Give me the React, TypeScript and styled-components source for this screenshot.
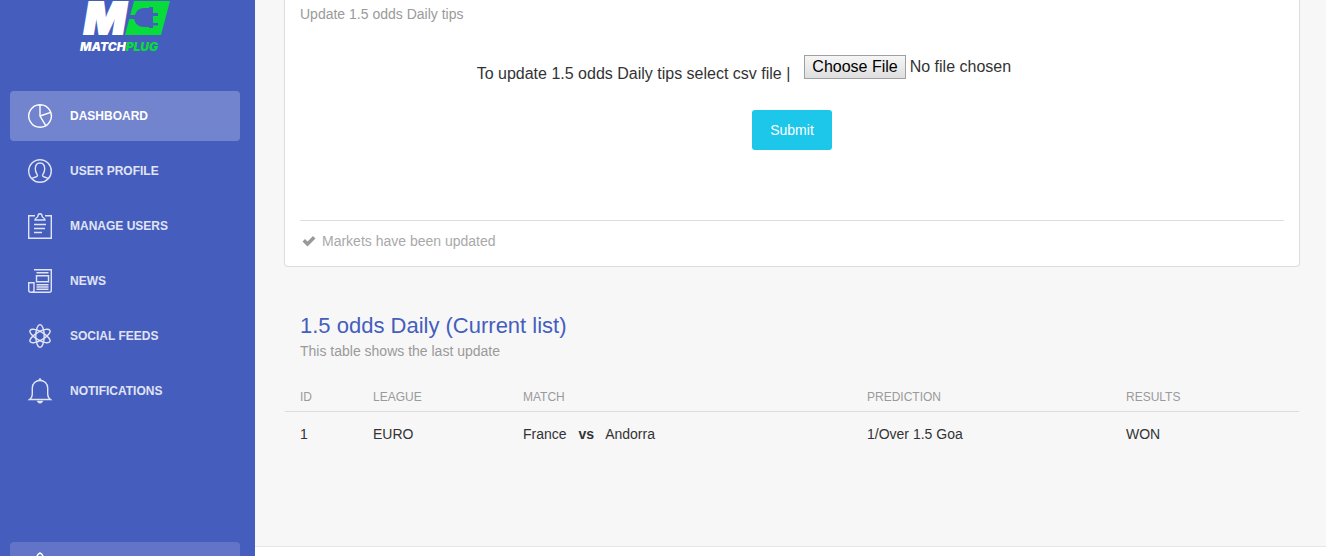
import React from "react";
import styled, { createGlobalStyle } from "styled-components";

const GlobalStyle = createGlobalStyle`
  *, *::before, *::after { box-sizing: border-box; }
  body {
    margin: 0;
    background: #f7f7f8;
    color: #333;
    font-family: "Liberation Sans", Arial, sans-serif;
    font-size: 14px;
    line-height: 20px;
  }
`;

const Page = styled.div`
  display: flex;
  min-height: 100vh;
`;

const Sidebar = styled.aside`
  display: flex;
  flex-direction: column;
  flex: 0 0 255px;
  padding: 0 15px 0 10px;
  background: #455ebd;
  color: #fff;
`;

const Brand = styled.a`
  display: block;
  height: 91px;
  padding-left: 66px;
`;

const NavList = styled.nav`
  display: flex;
  flex-direction: column;
  gap: 5px;
`;

const NavLink = styled.a<{ $active?: boolean }>`
  display: flex;
  align-items: center;
  gap: 18px;
  height: 50px;
  padding: 0 18px;
  border-radius: 4px;
  background: ${(p) => (p.$active ? "#7284ce" : "transparent")};
  color: ${(p) => (p.$active ? "#fff" : "#e0e4f4")};
  font-size: 12px;
  font-weight: 700;
  text-decoration: none;
  text-transform: uppercase;
`;

const Icon = styled.svg`
  flex: none;
  width: 24px;
  height: 28px;
  overflow: visible;
  fill: none;
  stroke: currentColor;
  stroke-width: 1.4;
`;

const BottomLink = styled.a`
  display: flex;
  height: 14px;
  margin-top: auto;
  padding: 10px 18px 0;
  overflow: hidden;
  border-radius: 4px 4px 0 0;
  background: #6174c7;
  color: #fff;
`;

const Main = styled.div`
  display: flex;
  flex: 1;
  flex-direction: column;
  min-width: 0;
`;

const Content = styled.main`
  flex: 1;
  padding: 0 26px 0 29px;
`;

const Card = styled.section`
  padding: 4px 15px 15px;
  border: 1px solid #dcdcdc;
  border-top: 0;
  border-radius: 0 0 4px 4px;
  background: #fff;
`;

const Caption = styled.p`
  margin: 0;
  color: #9a9a9a;
`;

const Form = styled.form`
  display: flex;
  flex-direction: column;
  align-items: center;
  gap: 25px;
  padding: 31px 0 70px;
  color: #333;
`;

const FileRow = styled.div`
  display: flex;
  gap: 14px;
  height: 30px;
  font-size: 16px;
`;

const FileLabel = styled.label`
  padding-top: 9px;
`;

const FileInput = styled.input`
  width: 303px;
  height: 26px;
  color: #333;
  font: inherit;

  &::file-selector-button {
    height: 24px;
    margin: 0 4px 0 0;
    padding: 0 7px;
    border: 1px solid #a0a0a0;
    border-radius: 0;
    background: linear-gradient(#f6f6f6, #dedede);
    color: #000;
    font: inherit;
  }
`;

const SubmitButton = styled.button`
  width: 80px;
  height: 40px;
  padding: 0;
  border: 0;
  border-radius: 3px;
  background: #1dc7ea;
  color: #fff;
  font: inherit;
  font-size: 14px;
`;

const Status = styled.div`
  display: flex;
  align-items: center;
  gap: 6px;
  padding: 10px 0 0 2px;
  border-top: 1px solid #ddd;
  color: #a9a9a9;
`;

const CheckIcon = styled.svg`
  width: 14px;
  height: 14px;
  fill: #999;
`;

const ListHeader = styled.header`
  padding: 44px 16px 0;
`;

const Title = styled.h2`
  margin: 0;
  color: #455ebd;
  font-size: 22px;
  font-weight: 400;
  line-height: 30px;
`;

const Table = styled.table`
  width: calc(100% - 2px);
  margin: 20px 1px 0;
  border-collapse: collapse;
  table-layout: fixed;
  text-align: left;
`;

const HeadCell = styled.th<{ $width?: number }>`
  width: ${(p) => (p.$width ? `${p.$width}px` : "auto")};
  height: 30px;
  padding: 2px 8px 0;
  border-bottom: 1px solid #ddd;
  color: #9a9a9a;
  font-size: 12px;
  font-weight: 400;
  text-transform: uppercase;

  &:first-child { padding-left: 15px; }
`;

const Cell = styled.td`
  height: 46px;
  padding: 0 8px;

  &:first-child { padding-left: 15px; }
`;

const Versus = styled.b`
  margin: 0 11px 0 12px;
`;

const Footer = styled.footer`
  height: 10px;
  border-top: 1px solid #e7e7e7;
  background: #fff;
`;

const Logo = () => (
  <svg width="100" height="54" viewBox="0 0 100 54" role="img" aria-label="Matchplug">
    <path fill="#07dc3c" d="M58 1H94L85 35H49Z" />
    <text x="8" y="34" fill="#fff" stroke="#fff" strokeWidth="2" fontFamily="Inter" fontSize="44" fontWeight="900" fontStyle="italic">M</text>
    <path
      fill="#455ebd"
      d="M53 15H59Q61 8 68 8H73V7H77V13H82V16H77V23H82V25.500H77V28H73V27H68Q60 27 58 19H52Z"
    />
    <text x="4" y="51" fontFamily="Inter" fontSize="12" fontWeight="900" fontStyle="italic">
      <tspan fill="#fff">MATCH</tspan><tspan fill="#07dc3c">PLUG</tspan>
    </text>
  </svg>
);

const navItems = [
  {
    label: "Dashboard",
    active: true,
    icon: <path d="M12 2.700a11.300 11.300 0 1 0 .1 0M12 2.700V14l5.800 9.600M12 14l10.700-3.700" />,
  },
  {
    label: "User profile",
    icon: (
      <>
        <circle cx="12" cy="14" r="11.300" />
        <path d="M4 21.500c2-1.500 5.500-1.200 5.500-3 0-1.500-2.200-2.500-2.200-6.500C7.300 8 9 6 12 6s4.700 2 4.700 6c0 4-2.200 5-2.200 6.500 0 1.800 3.500 1.500 5.500 3" />
      </>
    ),
  },
  {
    label: "Manage users",
    icon: (
      <>
        <path d="M7 3.700H.700v22.600h22.600V3.700H17M6 12.500h12M6 16.500h11M6 20.500h8" />
        <path d="M7 8c0-2.500 3-2 3-4 0-3 4-3 4 0 0 2 3 1.500 3 4Z" />
      </>
    ),
  },
  {
    label: "News",
    icon: (
      <>
        <path d="M6 2.700h17.300v20.600q0 2-2 2H3q-2.300 0-2.300-2V15.700H6v7.600q0 2-2.500 2" />
        <path d="M8.500 8.700h12v6h-12ZM8.500 5.700h12M8.500 17.700h12M8.500 20h12M8.500 22.300h12" />
      </>
    ),
  },
  {
    label: "Social feeds",
    icon: (
      <>
        <ellipse cx="12" cy="14" rx="4.200" ry="11.400" />
        <ellipse cx="12" cy="14" rx="4.200" ry="11.400" transform="rotate(60 12 14)" />
        <ellipse cx="12" cy="14" rx="4.200" ry="11.400" transform="rotate(120 12 14)" />
      </>
    ),
  },
  {
    label: "Notifications",
    icon: (
      <>
        <path d="M1.500 22.500c2-1.500 2.800-2.500 2.800-5.500V11c0-4.500 3.500-7.500 7.700-7.500s7.700 3 7.700 7.500v6c0 3 .8 4 2.800 5.500Z" />
        <path d="M11 3q1-2 2 0M10 24.500q2 2.500 4 0Z" />
      </>
    ),
  },
];

const columns = [
  { name: "ID", width: 80 },
  { name: "League", width: 150 },
  { name: "Match" },
  { name: "Prediction", width: 259 },
  { name: "Results", width: 181 },
];

const rows = [
  { id: 1, league: "EURO", home: "France", away: "Andorra", prediction: "1/Over 1.5 Goa", result: "WON" },
];

export default function App() {
  return (
    <>
      <GlobalStyle />
      <Page>
        <Sidebar>
          <Brand href="#"><Logo /></Brand>
          <NavList>
            {navItems.map((item) => (
              <NavLink key={item.label} href="#" $active={item.active}>
                <Icon viewBox="0 0 24 28" aria-hidden="true">{item.icon}</Icon>
                {item.label}
              </NavLink>
            ))}
          </NavList>
          <BottomLink href="#">
            <Icon viewBox="0 0 24 28" aria-hidden="true">
              <path d="M8 9c0-4 2-7 4-8 2 1 4 4 4 8v12H8Z" />
            </Icon>
          </BottomLink>
        </Sidebar>
        <Main>
          <Content>
            <Card>
              <Caption>Update 1.5 odds Daily tips</Caption>
              <Form onSubmit={(e) => e.preventDefault()}>
                <FileRow>
                  <FileLabel htmlFor="csv">To update 1.5 odds Daily tips select csv file |</FileLabel>
                  <FileInput id="csv" type="file" accept=".csv" />
                </FileRow>
                <SubmitButton type="submit">Submit</SubmitButton>
              </Form>
              <Status>
                <CheckIcon viewBox="0 0 14 14" aria-hidden="true">
                  <path d="M0.500 7.500L3 5L5.500 7.500L11 2L13.500 4.500L5.500 12.500Z" />
                </CheckIcon>
                Markets have been updated
              </Status>
            </Card>
            <ListHeader>
              <Title>1.5 odds Daily (Current list)</Title>
              <Caption>This table shows the last update</Caption>
            </ListHeader>
            <Table>
              <thead>
                <tr>
                  {columns.map((c) => (
                    <HeadCell key={c.name} $width={c.width}>{c.name}</HeadCell>
                  ))}
                </tr>
              </thead>
              <tbody>
                {rows.map((r) => (
                  <tr key={r.id}>
                    <Cell>{r.id}</Cell>
                    <Cell>{r.league}</Cell>
                    <Cell>{r.home}<Versus>vs</Versus>{r.away}</Cell>
                    <Cell>{r.prediction}</Cell>
                    <Cell>{r.result}</Cell>
                  </tr>
                ))}
              </tbody>
            </Table>
          </Content>
          <Footer />
        </Main>
      </Page>
    </>
  );
}
